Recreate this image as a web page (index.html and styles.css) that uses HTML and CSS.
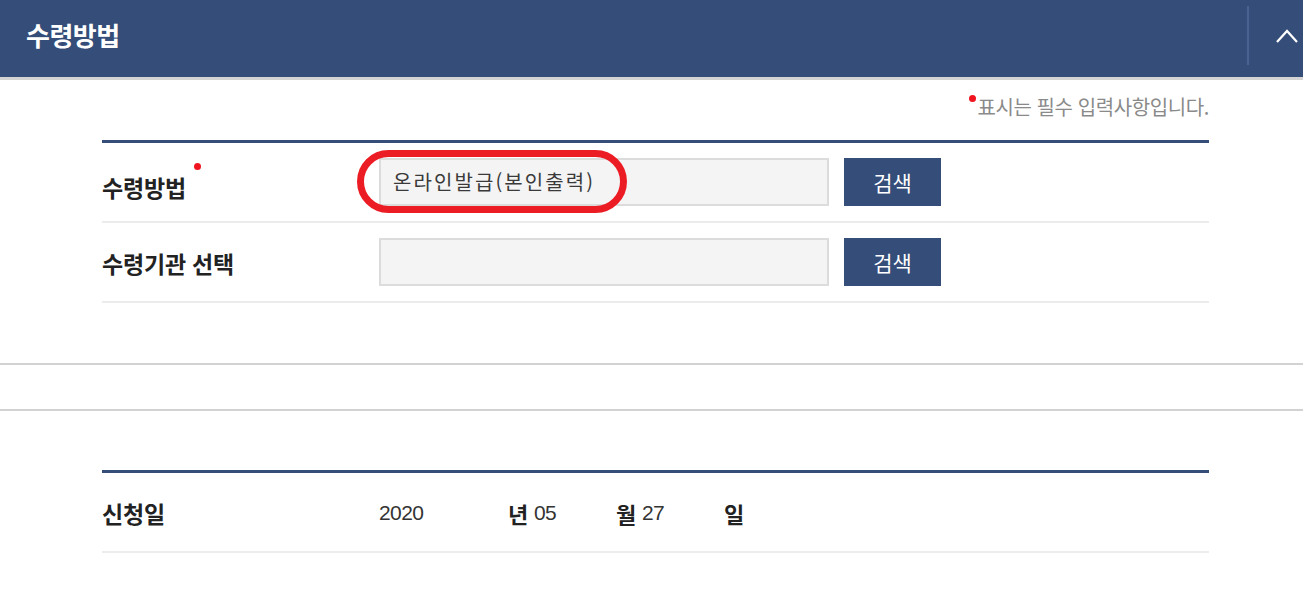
FILE: index.html
```html
<!DOCTYPE html>
<html lang="ko">
<head>
<meta charset="utf-8">
<title>수령방법</title>
<link rel="stylesheet" href="styles.css">
</head>
<body>
<header class="panel-head">
  <h1 class="panel-title">수령방법</h1>
  <button class="toggle" type="button" aria-label="접기">
    <svg width="22" height="14" viewBox="0 0 22 14"><polyline points="1,13 11,2 21,13" fill="none" stroke="#fff" stroke-width="2.2"/></svg>
  </button>
</header>

<section class="wrap first">
  <p class="note"><span class="req"></span>표시는 필수 입력사항입니다.</p>
  <div class="table">
    <div class="row">
      <div class="label">수령방법<span class="req req-label"></span></div>
      <div class="field">
        <div class="input">온라인발급(본인출력)</div>
        <span class="mark"></span>
      </div>
      <button class="btn" type="button">검색</button>
    </div>
    <div class="row">
      <div class="label">수령기관 선택</div>
      <div class="field">
        <div class="input"></div>
      </div>
      <button class="btn" type="button">검색</button>
    </div>
  </div>
</section>

<div class="band"></div>

<section class="wrap second">
  <div class="table">
    <div class="row">
      <div class="label">신청일</div>
      <div class="date">
        <span class="num year">2020</span><span class="unit">년</span>
        <span class="num">05</span><span class="unit">월</span>
        <span class="num">27</span><span class="unit">일</span>
      </div>
    </div>
  </div>
</section>
</body>
</html>
```

FILE: styles.css
```css
* { box-sizing: border-box; }
html, body { margin: 0; padding: 0; background: #fff; }
body {
  font-family: "Noto Sans CJK KR", "Noto Sans", sans-serif;
  color: #222;
  width: 1303px;
  overflow: hidden;
}

.panel-head {
  display: flex;
  justify-content: space-between;
  align-items: flex-start;
  height: 80px;
  background: #344d79;
  border-bottom: 3px solid #d4d4d4;
}
.panel-title {
  margin: 0;
  padding-left: 26px;
  font-size: 26px;
  font-weight: 700;
  line-height: 70px;
  color: #fff;
  letter-spacing: -0.5px;
}
.toggle {
  display: flex;
  align-items: center;
  margin-top: 6px;
  height: 59px;
  width: 56px;
  padding: 0 0 0 27px;
  background: transparent;
  border: 0;
  border-left: 2px solid #4a6290;
}
.toggle svg { display: block; }

.wrap {
  width: 1107px;
  margin-left: 102px;
}
.first { padding-bottom: 60px; }
.second { margin-top: 59px; }

.note {
  margin: 0;
  height: 60px;
  padding-top: 14px;
  text-align: right;
  font-size: 20px;
  line-height: 26px;
  color: #8a8a8a;
  letter-spacing: -0.4px;
}
.req {
  display: inline-block;
  width: 7px;
  height: 7px;
  border-radius: 50%;
  background: #f0141e;
  vertical-align: 13px;
  margin-right: 1px;
}
.req-label { margin-left: 8px; vertical-align: 27px; }

.table { border-top: 3px solid #344d79; }
.row {
  display: flex;
  align-items: center;
  height: 80px;
  border-bottom: 2px solid #ececec;
}
.label {
  width: 277px;
  flex: none;
  font-size: 23px;
  font-weight: 700;
  color: #222;
  padding-top: 2px;
  letter-spacing: -0.2px;
}
.field {
  position: relative;
  width: 450px;
  flex: none;
}
.input {
  height: 48px;
  background: #f4f4f4;
  border: 2px solid #dcdcdc;
  padding-left: 12px;
  font-size: 20px;
  line-height: 44px;
  color: #3a3a3a;
  letter-spacing: 2.1px;
}
.mark {
  position: absolute;
  left: -22px;
  top: -8px;
  width: 270px;
  height: 63px;
  border: 7px solid #ec1c24;
  border-radius: 32px;
}
.btn {
  margin-left: 15px;
  width: 97px;
  height: 48px;
  border: 0;
  background: #344d79;
  color: #fff;
  font-family: "Noto Sans CJK KR", sans-serif;
  font-size: 21px;
  padding: 0;
}

.band {
  height: 48px;
  border-top: 2px solid #d2d2d2;
  border-bottom: 2px solid #d2d2d2;
}

.date {
  display: flex;
  align-items: center;
  padding-top: 2px;
}
.num {
  font-family: "Liberation Sans", sans-serif;
  font-size: 21px;
  letter-spacing: -0.6px;
  color: #333;
  width: 83px;
  padding-left: 1px;
}
.num.year { width: 129px; padding-left: 0; }
.unit {
  font-size: 22px;
  font-weight: 700;
  color: #222;
  width: 25px;
}
```
